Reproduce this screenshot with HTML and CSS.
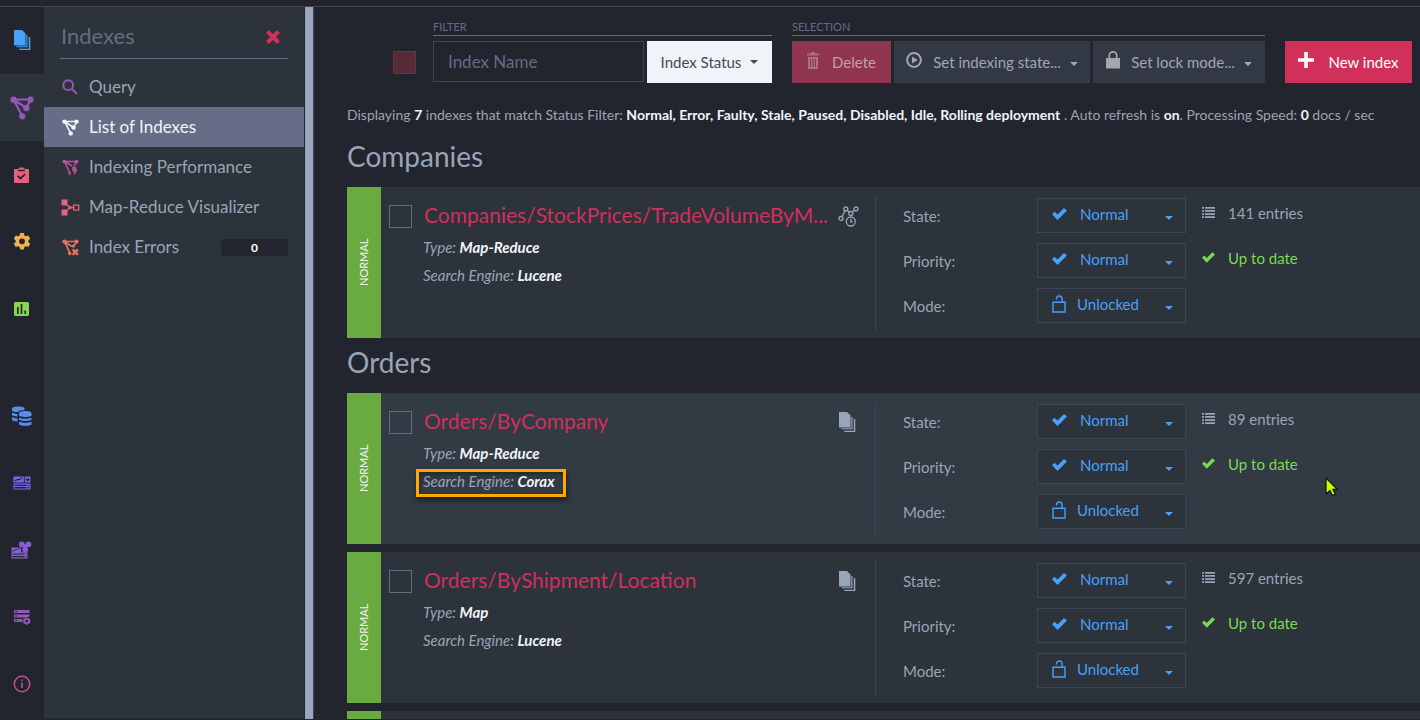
FILE: index.html
```html
<!DOCTYPE html>
<html lang="en">
<head>
<meta charset="utf-8">
<title>Indexes</title>
<link rel="stylesheet" href="styles.css">
</head>
<body>
<svg class="sprite" aria-hidden="true">
  <symbol id="docs" viewBox="0 0 18 21"><path d="M1 0h8l3.500 3.500V15.500H1z"/><path d="M13.300 5h1.200v12.300H3.500v-1.100h9.800zM15.800 7H17.300v13H6.200v-1.300h9.600z"/></symbol>
  <symbol id="graph" viewBox="0 0 24 24"><path d="M3.500 3.500H20.500M3.500 3.500L12.500 20.500M20.500 3.500L16.500 12M16.500 12L3.500 3.500" fill="none" stroke="currentColor" stroke-width="2.200"/><circle cx="3.500" cy="3.700" r="3.100"/><circle cx="20.500" cy="3.700" r="3.100"/><circle cx="16.300" cy="12" r="3.200"/><circle cx="12.300" cy="20.300" r="3.100"/></symbol>
  <symbol id="perf" viewBox="0 0 24 24"><path d="M3.500 3.500H20.500M3.500 3.500L11 19.500M20.500 3.500L17 9.500M14 9.500L3.500 3.500" fill="none" stroke="currentColor" stroke-width="2.200"/><circle cx="3.500" cy="3.700" r="2.800"/><circle cx="20.500" cy="3.700" r="2.800"/><path d="M8.500 18.500h3.500v4h-2zM14.500 10.500h5.500v4h2l-5 9v-6h-2.500z"/></symbol>
  <symbol id="errors" viewBox="0 0 24 24"><path d="M3.500 3.500H20.500M3.500 3.500L11 19.500M20.500 3.500L17 9.500M14 10.500L3.500 3.500" fill="none" stroke="currentColor" stroke-width="2.400"/><circle cx="3.500" cy="3.700" r="3"/><circle cx="20.500" cy="3.700" r="3"/><circle cx="16" cy="10" r="2.300"/><circle cx="11" cy="20.500" r="2.500"/><path d="M15 14.500l7.500 8M22.500 14.500l-7.500 8" stroke="currentColor" stroke-width="3.600"/></symbol>
  <symbol id="clip" viewBox="0 0 16 18"><path fill-rule="evenodd" d="M1 2.500h3.500L6 1h4l1.500 1.500H15a1 1 0 0 1 1 1V16.500a1 1 0 0 1-1 1H1a1 1 0 0 1-1-1V3.500a1 1 0 0 1 1-1zM4.500 3.500v1.500h7V3.500zM4.400 9.200L3.300 10.500 7 14l5.500-5.500-1.200-1.200L7 11.500z"/></symbol>
  <symbol id="gear" viewBox="0 0 24 24"><path fill-rule="evenodd" d="M9.500 0h5l.7 3.300 1.900 1.100 3.300-1.100 2.500 4.400-2.500 2.200v2.200l2.500 2.200-2.500 4.400-3.300-1.100-1.900 1.100-.7 3.300h-5l-.7-3.300-1.900-1.100-3.300 1.100-2.500-4.400 2.500-2.200V9.900L1.100 7.700l2.500-4.400 3.300 1.100 1.900-1.100zM12 7.200a3.900 3.900 0 1 0 0 7.800 3.900 3.900 0 0 0 0-7.800z"/></symbol>
  <symbol id="chart" viewBox="0 0 15 14"><path fill-rule="evenodd" d="M1.500 0h12A1.500 1.500 0 0 1 15 1.500v11a1.500 1.500 0 0 1-1.500 1.500h-12A1.500 1.500 0 0 1 0 12.500v-11A1.500 1.500 0 0 1 1.500 0zM3 5v7h1.700V5zM6.700 2v10h1.600V2zM10.400 8.500V12H12V8.500z"/></symbol>
  <symbol id="dbs" viewBox="0 0 20 20"><path d="M0 2.500C0-.3 12.500-.3 12.500 2.500V4Q7 4 6 6Q1 6 0 4.500zM0 6.500q2 1.300 5.500 1.500v2.500Q1 10.300 0 9zM0 11q2 1.300 5.500 1.500v3Q1 15.500 0 13.800z"/><path d="M7 7.300c0-3.200 12.500-3.200 12.500 0v2c0 2.200-12.500 2.200-12.500 0zM7 11.700q6 2 12.500 0v2.200q-6.500 2.300-12.500 0zM7 15.800q6 2.200 12.500 0V18c0 2.400-12.500 2.400-12.500 0z"/></symbol>
  <symbol id="board" viewBox="0 0 18 14"><path fill-rule="evenodd" d="M.5.500h10.300v6H.5zM1.800 4.300v1.100L5 4l1.500.2L9.500 2V1.200L6 3 4.300 2.900zM11.800.500h5.700v6h-5.700zM13 2.500v1.800l1.700 1 1.800-1.300V3l-1.200-.7-.7.700zM.5 7.500h17v6H.5zM1.600 8.700v1.200h12V8.700zM1.600 11v1.400h12V11zM14.700 8.700v1.200h1.600V8.700zM14.700 11v1.400h1.600V11z"/></symbol>
  <symbol id="clusterboard" viewBox="0 0 21 18"><path fill-rule="evenodd" d="M.5 6.500H10v4.800h6.500V17.500H.5zM1.600 9.700v1L5 9l4-1.200V7L4.500 8.500zM1.500 12.600v1h12v-1zM1.500 15v1.200h12V15zM14.500 12.600v1h1v-1zM14.500 15v1.200h1V15z"/><circle cx="10.800" cy="3.300" r="2.900"/><circle cx="17.500" cy="3.300" r="2.900"/><circle cx="14.200" cy="8.700" r="2.900"/><path d="M11 3l6.500.5-3.500 5z"/></symbol>
  <symbol id="servers" viewBox="0 0 18 16"><path fill-rule="evenodd" d="M1 1h15.500v3H1zM2.300 2v1h2V2zM1 5.500h15.500v2l-4 1H1zM2.300 6.500v1h2v-1zM1 10h8.500v3H1zM2.300 11v1h2v-1z"/><path d="M12.800 8.500h1.800l.4 1.300 1.600-.5 1 1.700-1 1 1 1.200-1 1.600-1.600-.4-.4 1.300h-1.800l-.4-1.300-1.500.4-1-1.600 1-1.200-1-1 1-1.700 1.500.5zM13.700 10.700a1.300 1.300 0 1 0 0 2.600 1.300 1.300 0 0 0 0-2.600z" fill-rule="evenodd"/></symbol>
  <symbol id="info" viewBox="0 0 18 18"><circle cx="9" cy="9" r="7.700" fill="none" stroke="currentColor" stroke-width="1.500"/><path d="M8.200 4.500h1.600v1.600H8.200zM8.200 7.500h1.600v5.500H8.200z"/></symbol>
  <symbol id="close" viewBox="0 0 14 14"><path d="M1.500 1.500l11 11M12.500 1.500l-11 11" stroke="currentColor" stroke-width="4"/></symbol>
  <symbol id="search" viewBox="0 0 16 16"><g fill="none" stroke="currentColor" stroke-width="2"><circle cx="6.200" cy="6.200" r="4.900"/><path d="M9.800 9.800L15 15"/></g></symbol>
  <symbol id="mapreduce" viewBox="0 0 19 16"><path d="M.5 0h6v6h-6zM.5 10h6v6h-6z"/><path d="M5.500 5l4.500 3.500M5.500 11.500L10 7.500M9 8h3M12.700 5.700h5v5h-5z" fill="none" stroke="currentColor" stroke-width="1.300"/><circle cx="9" cy="8" r="1.600"/></symbol>
  <symbol id="trash" viewBox="0 0 12 17"><path fill-rule="evenodd" d="M4 0h4v1.500h4v2H0v-2h4zM1 5h10v12H1zM3 7v8h1V7zM5.500 7v8h1V7zM8 7v8h1V7z"/></symbol>
  <symbol id="play" viewBox="0 0 16 16"><circle cx="8" cy="8" r="6.900" fill="none" stroke="currentColor" stroke-width="2"/><path d="M6 4.500v7L11.700 8z"/></symbol>
  <symbol id="lock" viewBox="0 0 14 18"><path d="M0 7h14v10.500H0z"/><path d="M3.300 8V4.500a3.700 3.700 0 0 1 7.400 0V8" fill="none" stroke="currentColor" stroke-width="1.700"/></symbol>
  <symbol id="unlock" viewBox="0 0 14 18"><path d="M1 7.200h12v9.800H1zM4.500 4.500V3.700C4.500 0 10 0 10 3.700V7" fill="none" stroke="currentColor" stroke-width="1.400"/></symbol>
  <symbol id="plus" viewBox="0 0 16 16"><path d="M8 0v16M0 8h16" stroke="currentColor" stroke-width="3.600"/></symbol>
  <symbol id="check" viewBox="0 0 15 12"><path d="M0 6.300L2.600 3.700 5.500 6.600 12 0l3 2.500L5.500 12z"/></symbol>
  <symbol id="list" viewBox="0 0 13 11"><path d="M0 0h2v1.700H0zM3 0h10v1.700H3zM0 3.100h2v1.700H0zM3 3.100h10v1.700H3zM0 6.200h2v1.700H0zM3 6.200h10v1.700H3zM0 9.300h2V11H0zM3 9.300h10V11H3z"/></symbol>
  <symbol id="caret" viewBox="0 0 8 4"><path d="M0 0h8L4 4z"/></symbol>
  <symbol id="series" viewBox="0 0 21 21"><g fill="none" stroke="currentColor" stroke-width="1.300"><circle cx="3" cy="12.500" r="2"/><circle cx="7.800" cy="3" r="2"/><circle cx="12.800" cy="7.500" r="2"/><circle cx="18" cy="3" r="2"/><path d="M4 10.700L7 4.900M9.300 4.300l2 1.900M14.200 6.100L16.500 4.300M12.800 9.500v1"/><circle cx="12.800" cy="15.500" r="4.500"/><path d="M12.800 12.700v3.100h2"/></g></symbol>
  <symbol id="pointer" viewBox="0 0 13 20"><path d="M1 1v16l4-3.500 2.300 5 3-1.300-2.300-4.700h4.500z" fill="#c6ff00" stroke="#15181c" stroke-width="1.300"/></symbol>
</svg>

<header class="topbar"></header>
<div class="app">
  <nav class="rail" aria-label="Main">
    <a href="#documents" class="rail-item blue" aria-label="Documents"><svg class="i18x21"><use href="#docs"/></svg></a>
    <a href="#indexes" class="rail-item purple current" aria-label="Indexes"><svg class="i24"><use href="#graph"/></svg></a>
    <a href="#tasks" class="rail-item rose" aria-label="Tasks"><svg class="i15x18"><use href="#clip"/></svg></a>
    <a href="#settings" class="rail-item amber" aria-label="Settings"><svg class="i18"><use href="#gear"/></svg></a>
    <a href="#stats" class="rail-item lime" aria-label="Stats"><svg class="i15x14"><use href="#chart"/></svg></a>
    <a href="#databases" class="rail-item azure second-group" aria-label="Databases"><svg class="i20"><use href="#dbs"/></svg></a>
    <a href="#server" class="rail-item indigo" aria-label="Server dashboard"><svg class="i18x14"><use href="#board"/></svg></a>
    <a href="#cluster" class="rail-item violet" aria-label="Cluster dashboard"><svg class="i21x18"><use href="#clusterboard"/></svg></a>
    <a href="#manage" class="rail-item purple" aria-label="Manage server"><svg class="i18x16"><use href="#servers"/></svg></a>
    <a href="#about" class="rail-item magenta" aria-label="About"><svg class="i18"><use href="#info"/></svg></a>
  </nav>

  <aside class="menu">
    <div class="menu-head">
      <h2>Indexes</h2>
      <button class="menu-close" aria-label="Close menu"><svg class="i14"><use href="#close"/></svg></button>
    </div>
    <ul class="menu-list">
      <li><a href="#query"><svg class="menu-icon purple search-icon"><use href="#search"/></svg>Query</a></li>
      <li><a href="#list" class="selected"><svg class="menu-icon"><use href="#graph"/></svg>List of Indexes</a></li>
      <li><a href="#performance"><svg class="menu-icon magenta"><use href="#perf"/></svg>Indexing Performance</a></li>
      <li><a href="#visualizer"><svg class="menu-icon rose wide"><use href="#mapreduce"/></svg>Map-Reduce Visualizer</a></li>
      <li><a href="#errors-list"><svg class="menu-icon coral"><use href="#errors"/></svg>Index Errors<span class="badge">0</span></a></li>
    </ul>
  </aside>
  <div class="scrollbar"></div>

  <main class="content">
    <div class="toolbar">
      <input type="checkbox" class="tick tick-all" aria-label="Select all indexes">
      <section class="group">
        <h3>Filter</h3>
        <div class="controls">
          <input type="text" class="search" placeholder="Index Name" aria-label="Index Name">
          <button class="btn light">Index Status<svg class="caret"><use href="#caret"/></svg></button>
        </div>
      </section>
      <section class="group">
        <h3>Selection</h3>
        <div class="controls">
          <button class="btn danger" disabled><svg class="i12x17"><use href="#trash"/></svg>Delete</button>
          <button class="btn dim" disabled><svg class="i16"><use href="#play"/></svg>Set indexing state...<svg class="caret"><use href="#caret"/></svg></button>
          <button class="btn dim lockmode" disabled><svg class="i14x18"><use href="#lock"/></svg>Set lock mode...<svg class="caret"><use href="#caret"/></svg></button>
        </div>
      </section>
      <button class="btn primary"><svg class="i16"><use href="#plus"/></svg>New index</button>
    </div>

    <p class="summary">Displaying <b>7</b> indexes that match Status Filter: <b>Normal, Error, Faulty, Stale, Paused, Disabled, Idle, Rolling deployment</b> . Auto refresh is <b>on</b>. Processing Speed: <b>0</b> docs / sec</p>

    <h2 class="group-title">Companies</h2>
    <article class="card">
      <div class="status">Normal</div>
      <div class="info">
        <input type="checkbox" class="tick" aria-label="Select Companies/StockPrices/TradeVolumeByM...">
        <a href="#i1" class="name">Companies/StockPrices/TradeVolumeByM...</a>
        <svg class="source i21"><use href="#series"/></svg>
        <p class="meta">Type: <b>Map-Reduce</b></p>
        <p class="meta">Search Engine: <b>Lucene</b></p>
      </div>
      <div class="settings">
        <label for="s1">State:</label>
        <div class="dropdown"><select id="s1"><option>Normal</option></select><svg class="i15x12"><use href="#check"/></svg><svg class="caret"><use href="#caret"/></svg></div>
        <label for="p1">Priority:</label>
        <div class="dropdown"><select id="p1"><option>Normal</option></select><svg class="i15x12"><use href="#check"/></svg><svg class="caret"><use href="#caret"/></svg></div>
        <label for="m1">Mode:</label>
        <div class="dropdown mode"><select id="m1"><option>Unlocked</option></select><svg class="i14x18"><use href="#unlock"/></svg><svg class="caret"><use href="#caret"/></svg></div>
      </div>
      <ul class="facts">
        <li><svg class="i13x11"><use href="#list"/></svg>141 entries</li>
        <li class="ok"><svg class="i13x11"><use href="#check"/></svg>Up to date</li>
      </ul>
    </article>

    <h2 class="group-title">Orders</h2>
    <article class="card hovered">
      <div class="status">Normal</div>
      <div class="info">
        <input type="checkbox" class="tick" aria-label="Select Orders/ByCompany">
        <a href="#i2" class="name">Orders/ByCompany</a>
        <svg class="source i18x21"><use href="#docs"/></svg>
        <p class="meta">Type: <b>Map-Reduce</b></p>
        <p class="meta"><span class="callout">Search Engine: <b>Corax</b></span></p>
      </div>
      <div class="settings">
        <label for="s2">State:</label>
        <div class="dropdown"><select id="s2"><option>Normal</option></select><svg class="i15x12"><use href="#check"/></svg><svg class="caret"><use href="#caret"/></svg></div>
        <label for="p2">Priority:</label>
        <div class="dropdown"><select id="p2"><option>Normal</option></select><svg class="i15x12"><use href="#check"/></svg><svg class="caret"><use href="#caret"/></svg></div>
        <label for="m2">Mode:</label>
        <div class="dropdown mode"><select id="m2"><option>Unlocked</option></select><svg class="i14x18"><use href="#unlock"/></svg><svg class="caret"><use href="#caret"/></svg></div>
      </div>
      <ul class="facts">
        <li><svg class="i13x11"><use href="#list"/></svg>89 entries</li>
        <li class="ok"><svg class="i13x11"><use href="#check"/></svg>Up to date</li>
      </ul>
      <svg class="pointer"><use href="#pointer"/></svg>
    </article>
    <article class="card">
      <div class="status">Normal</div>
      <div class="info">
        <input type="checkbox" class="tick" aria-label="Select Orders/ByShipment/Location">
        <a href="#i3" class="name">Orders/ByShipment/Location</a>
        <svg class="source i18x21"><use href="#docs"/></svg>
        <p class="meta">Type: <b>Map</b></p>
        <p class="meta">Search Engine: <b>Lucene</b></p>
      </div>
      <div class="settings">
        <label for="s3">State:</label>
        <div class="dropdown"><select id="s3"><option>Normal</option></select><svg class="i15x12"><use href="#check"/></svg><svg class="caret"><use href="#caret"/></svg></div>
        <label for="p3">Priority:</label>
        <div class="dropdown"><select id="p3"><option>Normal</option></select><svg class="i15x12"><use href="#check"/></svg><svg class="caret"><use href="#caret"/></svg></div>
        <label for="m3">Mode:</label>
        <div class="dropdown mode"><select id="m3"><option>Unlocked</option></select><svg class="i14x18"><use href="#unlock"/></svg><svg class="caret"><use href="#caret"/></svg></div>
      </div>
      <ul class="facts">
        <li><svg class="i13x11"><use href="#list"/></svg>597 entries</li>
        <li class="ok"><svg class="i13x11"><use href="#check"/></svg>Up to date</li>
      </ul>
    </article>
    <article class="card"><div class="status"></div></article>
  </main>
</div>
</body>
</html>
```
FILE: styles.css
```css
:root {
  --bg: #22252d;
  --panel: #2c333a;
  --panel-hover: #323a43;
  --line: #3e4555;
  --text: #98a5b8;
  --muted: #636c87;
  --link: #48a0f8;
  --red: #d0305a;
  --white: #f0f4f8;
}
* { box-sizing: border-box; }
body {
  margin: 0;
  height: 100vh;
  padding-bottom: 1px;
  display: flex;
  flex-direction: column;
  overflow: hidden;
  background: var(--bg);
  color: var(--text);
  font-family: Lato, "Open Sans", sans-serif;
  font-size: 15px;
  line-height: 20px;
}
h2, h3, p, ul { margin: 0; padding: 0; font-weight: 400; }
ul { list-style: none; }
a { color: inherit; text-decoration: none; }
button, input, select { font: inherit; color: inherit; margin: 0; }
button { border: 0; background: none; padding: 0; }
svg { display: block; fill: currentColor; flex: none; }
b { color: var(--white); font-weight: 700; }
.sprite { position: absolute; width: 0; height: 0; }

.i12x17 { width: 12px; height: 17px; }
.i13x11 { width: 13px; height: 11px; }
.i14 { width: 14px; height: 14px; }
.i14x18 { width: 14px; height: 18px; }
.i15x12 { width: 15px; height: 12px; }
.i15x14 { width: 15px; height: 14px; }
.i15x18 { width: 15px; height: 18px; }
.i16 { width: 16px; height: 16px; }
.i18 { width: 18px; height: 18px; }
.i18x14 { width: 18px; height: 14px; }
.i18x16 { width: 18px; height: 16px; }
.i18x21 { width: 18px; height: 21px; }
.i20 { width: 20px; height: 20px; }
.i21 { width: 21px; height: 21px; }
.i21x18 { width: 21px; height: 18px; }
.i24 { width: 24px; height: 24px; }
.caret { width: 8px; height: 4px; }

.blue { color: #48a0f8; }
.purple { color: #9459b8; }
.rose { color: #e8607f; }
.amber { color: #eeb055; }
.lime { color: #84d653; }
.azure { color: #588cf0; }
.indigo { color: #7468e8; }
.violet { color: #8560d4; }
.magenta { color: #bc5099; }
.coral { color: #ea6e62; }

.topbar { height: 7px; flex: none; border-bottom: 1px solid var(--line); }
.app { flex: 1; min-height: 0; display: flex; }

.rail { width: 44px; flex: none; }
.rail-item { display: flex; height: 67px; align-items: center; justify-content: center; padding-right: 1px; }
.rail-item.current { background: var(--panel); }
.second-group { margin-top: 40px; }

.menu { width: 260px; flex: none; background: var(--panel); margin-bottom: 1px; }
.menu-head {
  display: flex;
  align-items: center;
  justify-content: space-between;
  height: 52px;
  margin: 0 16px 8px;
  padding: 8px 8px 0 1px;
  border-bottom: 1px solid var(--muted);
}
.menu-head h2 { color: var(--muted); font-size: 22px; line-height: 28px; padding-bottom: 2px; }
.menu-close { color: var(--red); }
.menu-list a { display: flex; align-items: center; height: 40px; padding: 0 16px 0 18px; font-size: 17px; }
.menu-icon { width: 17px; height: 17px; margin-right: 10px; }
.menu-icon.search-icon { width: 16px; height: 16px; margin-right: 11px; }
.menu-icon.wide { width: 19px; margin: 0 9px 0 -1px; }
.menu-list .selected { background: #666e87; color: var(--white); }
.badge {
  margin-left: auto;
  width: 67px;
  border-radius: 2px;
  background: var(--bg);
  color: #fff;
  font-size: 12px;
  line-height: 17px;
  font-weight: 700;
  text-align: center;
}
.scrollbar { width: 10px; flex: none; background: #99a5b8; border-left: 1px solid var(--bg); border-right: 1px solid var(--line); }

.content { flex: 1; min-width: 0; overflow: hidden; padding: 12px 0 0 33px; }
.toolbar { display: flex; align-items: flex-end; padding-right: 8px; }
.tick {
  appearance: none;
  width: 23px;
  height: 23px;
  border: 1px solid var(--muted);
  background: transparent;
}
.tick-all { margin: 0 17px 9px 46px; border-color: #7a2945; background: #552b3a; }
.group { margin-right: 20px; }
.group h3 {
  height: 17px;
  margin-bottom: 5px;
  color: var(--muted);
  font-size: 11px;
  line-height: 16px;
  text-transform: uppercase;
  border-bottom: 1px solid var(--muted);
}
.controls { display: flex; gap: 3px; }
.search { width: 211px; height: 41px; padding: 0 14px; font-size: 17px; background: transparent; border: 1px solid var(--line); }
.search::placeholder { color: var(--muted); opacity: 1; }
.btn { display: flex; align-items: center; justify-content: center; height: 42px; padding-bottom: 1px; white-space: nowrap; font-size: 15px; }
.btn svg:first-child { margin-bottom: 3px; }
.btn .caret { margin: 4px 0 0 9px; }
.light { width: 125px; background: var(--white); color: #434a5c; }
.danger { width: 99px; background: #8f3550; color: #c1a0a9; gap: 13px; }
.danger svg { color: #ad7183; }
.dim { width: 196px; background: #323945; color: #a3a6ab; }
.dim svg:first-child { margin-right: 11px; }
.lockmode { width: 172px; }
.primary { width: 127px; margin-left: auto; background: var(--red); color: #fff; gap: 14px; }

.summary { margin-top: 22px; font-size: 14px; white-space: nowrap; }
.group-title { font-size: 28px; line-height: 40px; margin: 11px 0; color: var(--text); }
.card + .group-title { margin: 4px 0 11px; }
.card { position: relative; display: flex; height: 151px; margin-bottom: 8px; background: var(--panel); }
.card:has(+ .group-title) { margin-bottom: 0; }
.hovered { background: var(--panel-hover); }
.status {
  width: 34px;
  flex: none;
  background: #69ab40;
  color: var(--white);
  writing-mode: vertical-rl;
  transform: rotate(180deg);
  display: flex;
  align-items: center;
  justify-content: center;
  font-size: 11px;
  text-transform: uppercase;
}
.info {
  width: 495px;
  margin: 9px 0 8px;
  padding: 3px 16px 0 8px;
  display: grid;
  grid-template-columns: 23px 1fr 21px;
  grid-template-rows: 34px 28px 28px;
  align-items: center;
  border-right: 1px solid var(--line);
}
.name { margin-left: 12px; padding-bottom: 2px; color: var(--red); font-size: 21px; line-height: 28px; white-space: nowrap; }
.source { justify-self: start; }
.meta { grid-column: 1 / -1; margin-left: 34px; font-style: italic; }
.callout { position: relative; }
.callout::after {
  content: "";
  position: absolute;
  inset: -3px -12px -7px -7px;
  border: 3px solid #fda901;
  box-shadow: 1px 3px 5px rgba(0, 0, 0, .5), inset 1px 2px 4px rgba(0, 0, 0, .4);
}
.settings {
  display: grid;
  grid-template-columns: 134px 149px;
  grid-auto-rows: 35px;
  gap: 10px 0;
  padding: 11px 0 0 27px;
  align-content: start;
}
.settings label { padding-top: 8px; }
.dropdown { display: grid; grid-template-columns: 14px 15px 1fr 12px; align-items: center; border: 1px solid var(--line); background: var(--panel); color: var(--link); }
.dropdown > svg { grid-row: 1; grid-column: 2; pointer-events: none; margin-bottom: 3px; }
.dropdown > .caret { grid-column: 3; justify-self: end; margin: 5px 0 0; }
.dropdown select {
  grid-area: 1 / 1 / 2 / -1;
  appearance: none;
  height: 33px;
  padding: 0 24px 4px 42px;
  border: 0;
  background: transparent;
}
.dropdown.mode select { padding-left: 39px; }
.facts { padding: 16px 0 0 16px; }
.facts li { display: flex; align-items: center; gap: 13px; height: 20px; margin-bottom: 25px; }
.facts svg { margin-bottom: 2px; }
.ok { color: #7bd854; }
.pointer { position: absolute; left: 978px; top: 84px; width: 13px; height: 20px; }
```
